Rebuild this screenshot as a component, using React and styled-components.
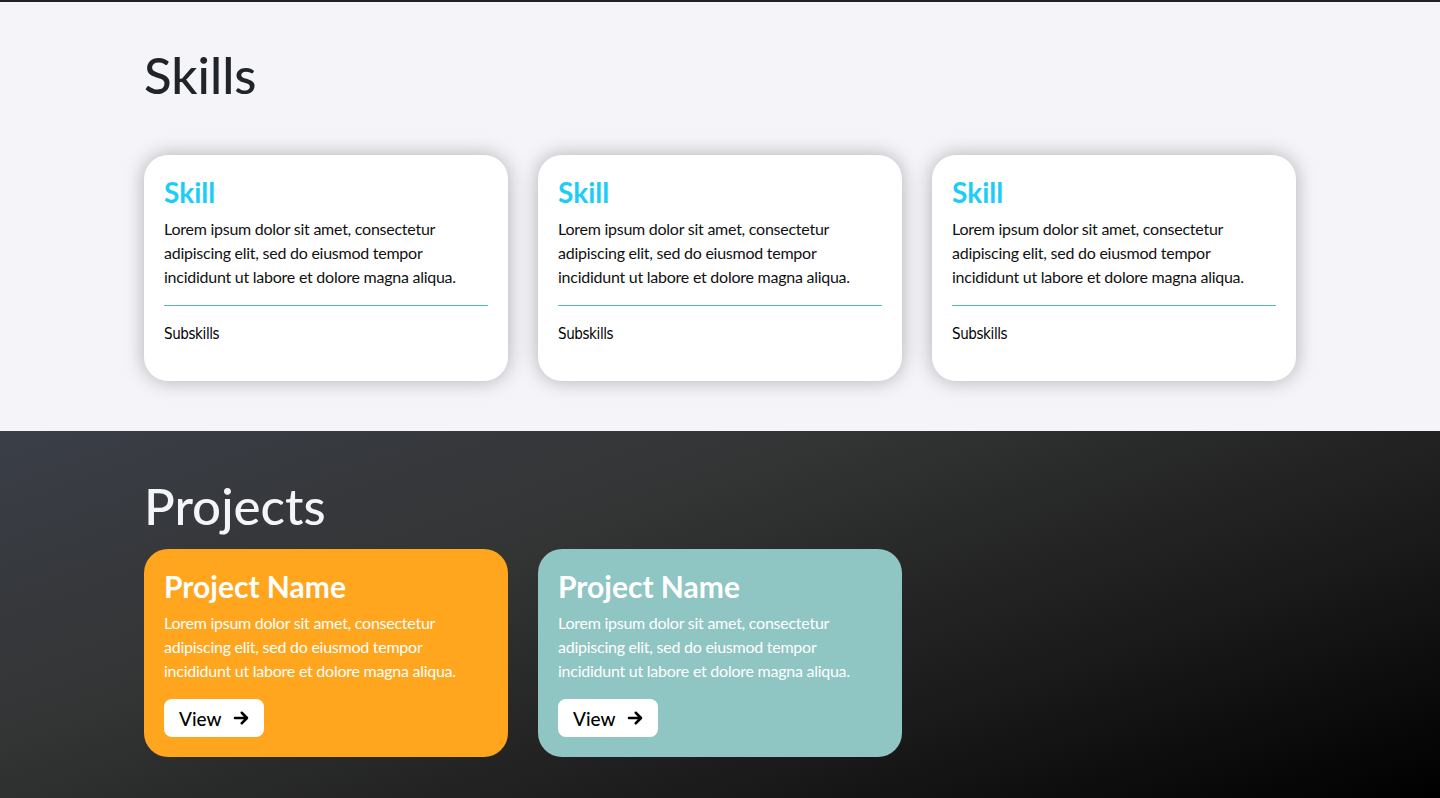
import React from "react";
import styled, { createGlobalStyle } from "styled-components";

const Global = createGlobalStyle`
  * { box-sizing: border-box; }
  html, body { margin: 0; padding: 0; }
  body { background: #f4f4f9; font-family: "Lato", "Noto Sans", sans-serif; }
`;

const TopLine = styled.div`
  height: 2px;
  background: #1f2228;
`;

const Section = styled.section`
  background: ${(p) => p.$dark ? "linear-gradient(160deg, #3a3e47 0%, #333434 35%, #1a1a1a 70%, #000 100%)" : "#f4f4f9"};
  padding: ${(p) => p.$dark ? "46px 0 41px" : "44px 0 50px"};
`;

const Container = styled.div`
  width: 1152px;
  margin: 0 auto;
`;

const Heading = styled.h2`
  margin: 0 0 ${(p) => p.$gap}px;
  font-family: "Lato", "Noto Sans", sans-serif;
  font-weight: 500;
  font-size: 51px;
  line-height: 58px;
  color: ${(p) => p.$light ? "#f4f4f9" : "#202329"};
`;

const Grid = styled.div`
  display: grid;
  grid-template-columns: repeat(3, 364px);
  gap: 30px;
`;

const SkillCard = styled.div`
  background: #fff;
  border-radius: 24px;
  padding: 20px 20px 35px;
  box-shadow: 0 0 20px rgba(0, 0, 0, 0.28);
`;

const CardTitle = styled.h3`
  margin: 0 0 8px;
  font-family: "Lato", "Noto Sans", sans-serif;
  font-weight: 700;
  font-size: ${(p) => p.$size}px;
  line-height: 34px;
  color: ${(p) => p.$color};
`;

const Body = styled.p`
  margin: 0;
  font-family: "Lato", "Noto Sans", sans-serif;
  font-size: 16px;
  letter-spacing: -0.25px;
  line-height: 24px;
  color: ${(p) => p.$color};
`;

const Divider = styled.div`
  height: 1px;
  background: #4fbcae;
  margin: 16px 0 16px;
`;

const Sub = styled.div`
  font-family: "DejaVu Sans", sans-serif;
  font-stretch: semi-condensed;
  font-size: 15px;
  letter-spacing: -0.4px;
  line-height: 24px;
  color: #000;
`;

const ProjectCard = styled.div`
  background: ${(p) => p.$bg};
  border-radius: 24px;
  padding: 20px 20px 20px;
`;

const ViewButton = styled.button`
  margin-top: 16px;
  display: inline-flex;
  align-items: center;
  gap: 10px;
  height: 38px;
  padding: 0 14px 0 15px;
  border: 0;
  border-radius: 8px;
  background: #fff;
  font-family: "Lato", "Noto Sans", sans-serif;
  font-weight: 500;
  font-size: 19px;
  color: #000;
`;

const lorem = "Lorem ipsum dolor sit amet, consectetur adipiscing elit, sed do eiusmod tempor incididunt ut labore et dolore magna aliqua.";

const Arrow = () => (
  <svg width="18" height="18" viewBox="0 0 24 24" fill="none" stroke="#000" strokeWidth="3.4" strokeLinecap="round" strokeLinejoin="round">
    <path d="M4 12h15M13 5l7 7-7 7" />
  </svg>
);

export default function App() {
  return (
    <>
      <Global />
      <TopLine />
      <Section>
        <Container>
          <Heading $gap={51}>Skills</Heading>
          <Grid>
            {[0, 1, 2].map((i) => (
              <SkillCard key={i}>
                <CardTitle $size={28} $color="#1dcdf5">Skill</CardTitle>
                <Body $color="#111">{lorem}</Body>
                <Divider />
                <Sub>Subskills</Sub>
              </SkillCard>
            ))}
          </Grid>
        </Container>
      </Section>
      <Section $dark>
        <Container>
          <Heading $light $gap={14}>Projects</Heading>
          <Grid>
            {["#ffa51e", "#8fc5c3"].map((c) => (
              <ProjectCard key={c} $bg={c}>
                <CardTitle $size={30} $color="#fff">Project Name</CardTitle>
                <Body $color="#fff">{lorem}</Body>
                <ViewButton>View <Arrow /></ViewButton>
              </ProjectCard>
            ))}
          </Grid>
        </Container>
      </Section>
    </>
  );
}
